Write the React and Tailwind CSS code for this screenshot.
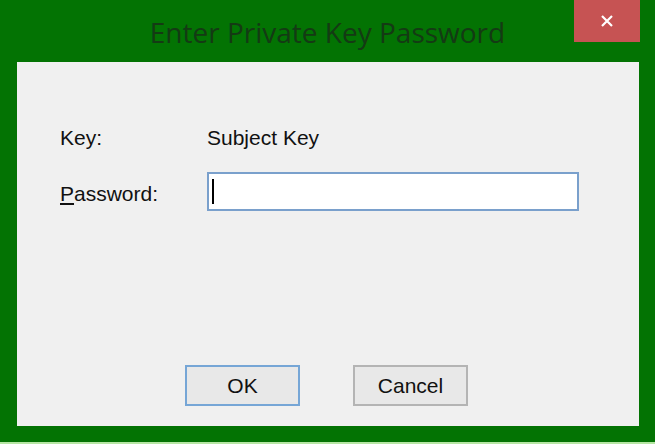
export default function App() {
  return (
    <div className="w-[655px] h-[444px] bg-[#037303] flex flex-col" style={{ fontFamily: '"Liberation Sans", Arial, sans-serif' }}>
      <div className="h-[62px] relative flex items-center justify-center shrink-0">
        <div className="text-[28px] text-[#143a14] pt-[2px]" style={{ fontFamily: '"Open Sans", "Noto Sans", sans-serif' }}>Enter Private Key Password</div>
        <div className="absolute left-[574px] top-0 w-[66px] h-[42px] bg-[#c65353] flex items-center justify-center">
          <svg width="14" height="14" viewBox="0 0 14 14"><path d="M2 2L12 12M12 2L2 12" stroke="#fff" strokeWidth="2.2" /></svg>
        </div>
      </div>
      <div className="ml-[17px] w-[622px] h-[364px] bg-[#f0f0f0] flex flex-col text-[21px] text-[#111] shrink-0">
        <div className="flex items-center mt-[62px] h-[28px]">
          <div className="w-[190px] pl-[43px]">Key:</div>
          <div>Subject Key</div>
        </div>
        <div className="flex items-center mt-[19px] h-[40px]">
          <div className="w-[190px] pl-[43px] pt-[6px]"><span className="underline underline-offset-2">P</span>assword:</div>
          <div className="w-[372px] h-[39px] border-2 border-[#7aa0cc] bg-white flex items-center pl-[3px]">
            <div className="w-[2px] h-[25px] bg-black"></div>
          </div>
        </div>
        <div className="flex-1" />
        <div className="flex mb-[20px] pl-[168px] gap-[53px]">
          <div className="w-[115px] h-[41px] border-2 border-[#76a6d6] bg-[#e8e8e8] flex items-center justify-center">OK</div>
          <div className="w-[115px] h-[41px] border-2 border-[#b4b4b4] bg-[#e8e8e8] flex items-center justify-center">Cancel</div>
        </div>
      </div>
      <div className="flex-1" />
      <div className="h-[2px] bg-[#b6e6a4]" />
    </div>
  );
}
